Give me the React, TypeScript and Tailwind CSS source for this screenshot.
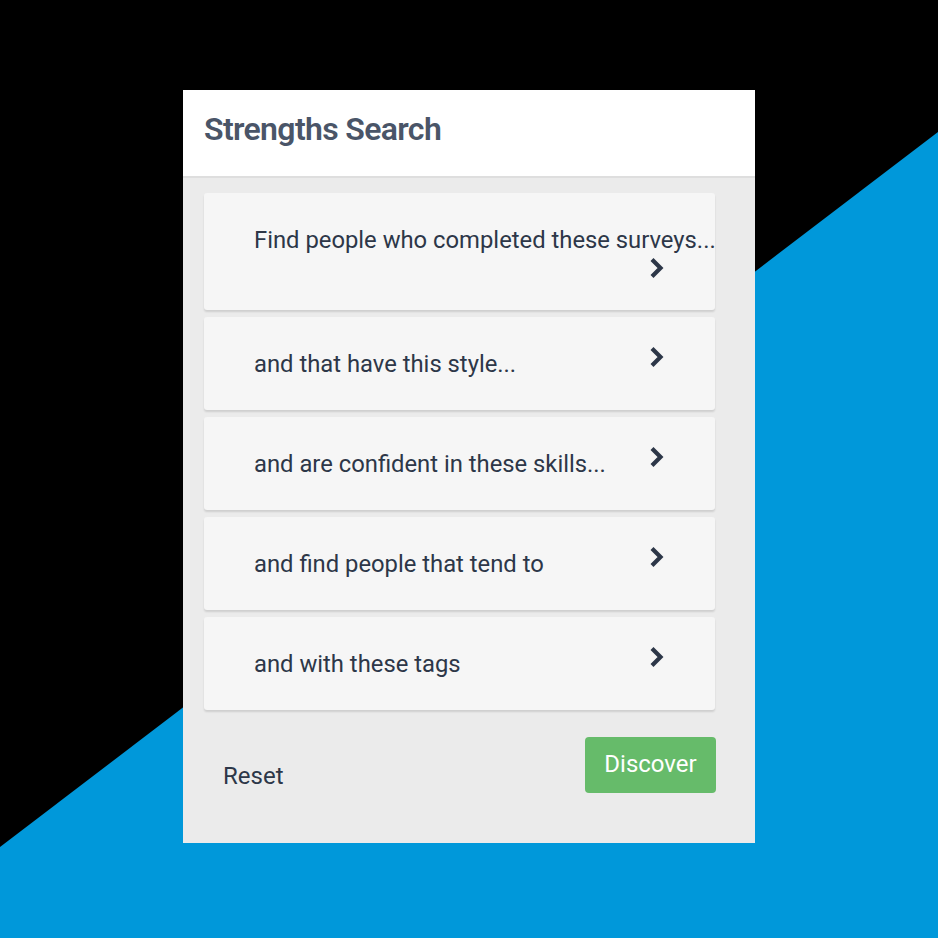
import React from "react";

function Chevron() {
  return (
    <svg width="16" height="22" viewBox="0 0 16 22" className="shrink-0 block">
      <path d="M3 2.5 L11.5 11 L3 19.5" fill="none" stroke="#2d3748" strokeWidth="4.2" strokeLinejoin="miter" strokeLinecap="butt" />
    </svg>
  );
}

const rows = [
  "and that have this style...",
  "and are confident in these skills...",
  "and find people that tend to",
  "and with these tags",
];

export default function App() {
  return (
    <div className="relative w-[938px] h-[938px] bg-black overflow-hidden" style={{ fontFamily: "Roboto, 'Noto Sans', sans-serif" }}>
      <svg className="absolute inset-0" width="938" height="938" viewBox="0 0 938 938">
        <polygon points="0,847 938,132 938,938 0,938" fill="#0098da" />
      </svg>
      <div className="relative pt-[90px] pl-[183px]">
        <div className="w-[572px] h-[753px] bg-[#ebebeb] flex flex-col">
          <div className="h-[88px] bg-white border-b-2 border-[#dedede] flex items-center pl-[21px] pb-[8px]">
            <h1 className="text-[32px] font-semibold text-[#4a5568] leading-none tracking-[-0.65px]">Strengths Search</h1>
          </div>
          <div className="flex flex-col gap-[7px] pt-[15px] pl-[21px] pr-[40px]">
            <div className="h-[117px] bg-[#f6f6f6] rounded-[3px] shadow-[0_2px_2px_rgba(0,0,0,0.12)] pl-[50px] pt-[32px] flex flex-col">
              <div className="text-[23.8px] leading-[30px] text-[#2d3748] whitespace-nowrap">Find people who completed these surveys...</div>
              <div className="flex justify-end pr-[50px] mt-[2px]">
                <Chevron />
              </div>
            </div>
            {rows.map((r) => (
              <div key={r} className="h-[93px] bg-[#f6f6f6] rounded-[3px] shadow-[0_2px_2px_rgba(0,0,0,0.12)] pl-[50px] pr-[50px] flex items-start justify-between">
                <div className="text-[23.8px] leading-[30px] text-[#2d3748] mt-[32px]">{r}</div>
                <div className="mt-[29px]">
                  <Chevron />
                </div>
              </div>
            ))}
          </div>
          <div className="flex justify-between pl-[40px] pr-[39px] pt-[27px]">
            <span className="text-[24px] text-[#2d3748] mt-[25px] leading-[28px]">Reset</span>
            <button className="w-[131px] h-[56px] bg-[#66bb6a] rounded-[4px] text-white text-[24px] leading-none pb-[2px]">Discover</button>
          </div>
        </div>
      </div>
    </div>
  );
}
